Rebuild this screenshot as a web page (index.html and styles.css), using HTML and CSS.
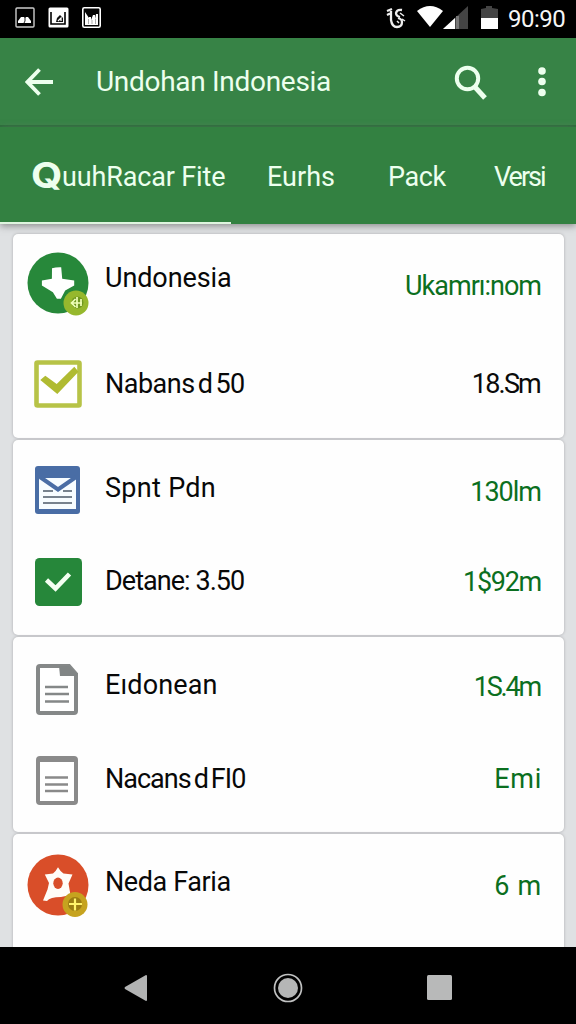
FILE: index.html
```html
<!DOCTYPE html>
<html lang="id">
<head>
<meta charset="utf-8">
<title>Undohan Indonesia</title>
<link rel="stylesheet" href="styles.css">
</head>
<body>
<div class="screen">
  <div class="status">
    <div class="notices">
      <svg width="20" height="21" viewBox="0 0 20 21"><rect x="1" y="1" width="18" height="19" rx="1" fill="none" stroke="#ccc" stroke-width="1.4"/><path d="M3 16v-2l3-4h3l1 1 1-1h2l3 4v2z" fill="#fff"/><path d="M10 10v4l-1 2" stroke="#222" fill="none"/></svg>
      <svg width="21" height="21" viewBox="0 0 21 21"><rect x=".5" y=".5" width="20" height="20" rx="1.5" fill="#fff"/><path d="M3 5v12h14V5" fill="none" stroke="#000" stroke-width="1.6"/><path d="M8 15l1-4 3-3 3 3v4z" fill="#111"/><path d="M10 14l3-3v3" fill="none" stroke="#fff" stroke-width="1.3"/></svg>
      <svg width="19" height="21" viewBox="0 0 19 21"><rect x=".8" y=".8" width="17.400" height="19.400" rx="1.500" fill="#050505" stroke="#fff" stroke-width="1.600"/><path d="M3 18V5l4 6v-1h2v3l2-5h2v4l1-5h2v11z" fill="#fff"/><path d="M6.500 12v5M10 13v4M13.500 12v5" stroke="#888" stroke-width=".7"/></svg>
    </div>
    <div class="signals">
      <svg class="sync" width="22" height="23" viewBox="0 0 22 23"><path d="M2 4l5-2M2 8l4-2M6 4v9q1 7 6 7 5 0 5-5 0-3-4-4M17 3q-5-1-6 3 0 3 4 4" fill="none" stroke="#eee" stroke-width="2.300"/><path d="M15 6l4 3M17 12l3 2M12 14l2 2" stroke="#eee" stroke-width="1.500"/></svg>
      <svg class="wifi" width="26" height="21" viewBox="0 0 26 21"><path d="M0 5Q13-5 26 5L13 21z" fill="#fff"/></svg>
      <svg class="cell" width="25" height="23" viewBox="0 0 25 23"><path d="M25 0v23H0z" fill="#444"/><path d="M12 12v11H0z" fill="#fff"/><path d="M14.500 10v13" stroke="#777" stroke-width="3"/></svg>
      <svg class="battery" width="17" height="23" viewBox="0 0 17 23"><path d="M0 3l5-1V0h6v2l6 1v9H0z" fill="#444"/><path d="M0 12h17v11H0z" fill="#fff"/></svg>
      <span class="clock">90:90</span>
    </div>
  </div>

  <header class="appbar">
    <svg class="back" width="28" height="28" viewBox="0 0 28 28"><path d="M14.500 1.500L2.500 14l12 12.500M2.500 14H28" fill="none" stroke="#edffee" stroke-width="3.800"/></svg>
    <h1 class="title">Undohan Indonesia</h1>
    <svg class="search" width="34" height="36" viewBox="0 0 34 36"><circle cx="13.500" cy="14.500" r="10.700" fill="none" stroke="#edffee" stroke-width="4"/><path d="M20.500 22.500L31 34" stroke="#edffee" stroke-width="5"/></svg>
    <svg class="more" width="8" height="30" viewBox="0 0 8 30"><circle cx="4" cy="4" r="3.800"/><circle cx="4" cy="14.500" r="3.800"/><circle cx="4" cy="25.500" r="3.800"/></svg>
  </header>

  <nav class="tabs">
    <div class="tab tab-active"><span class="big-q">Q</span><span class="tab-name">uuhRacar Fite</span></div>
    <div class="tab tab-second">Eurhs</div>
    <div class="tab tab-third">Pack</div>
    <div class="tab tab-fourth">Versi</div>
  </nav>

  <main class="list">
    <section class="card card-first">
      <div class="row row-a">
        <div class="icon icon-round"><svg width="64" height="66" viewBox="0 0 64 66"><circle cx="31" cy="32" r="30.500" fill="#27883a"/><path d="M25 17.200Q29 16 34.200 16.200L35.200 27.800 47.200 29.500V34.500L38.200 39.500 33.900 47.800H29.900L25.900 41.200 14.900 34.500V29.500L24.900 27.800z" fill="#fff"/><circle cx="49" cy="52" r="12.500" fill="#96b82d"/><circle cx="50.500" cy="51.500" r="6" fill="#6f981f"/><path d="M44 52h11M50 46v11M48.500 48l-4 4 4 4M54 48v7" stroke="#f0ffb8" stroke-width="1.700" fill="none"/></svg></div>
        <div class="label t1">Undonesia</div><div class="value v1">Ukamrı:nom</div>
      </div>
      <div class="row row-b">
        <div class="icon"><svg width="48" height="48" viewBox="0 0 48 48"><rect x="2.500" y="2.500" width="43" height="43" rx="1" fill="#fff" stroke="#b7c347" stroke-width="4.600"/><path d="M6.300 20L11.300 15.700 22.700 24 40.300 6.700 44.500 11.700 23.300 34z" fill="#b0bb32"/></svg></div>
        <div class="label t2">Nabans<span class="thin-gap"></span>d<span class="thin-gap"></span>50</div><div class="value dark v2">18.Sm</div>
      </div>
    </section>

    <section class="card card-second">
      <div class="row row-a">
        <div class="icon icon-left"><svg width="45" height="48" viewBox="0 0 45 48"><rect width="45" height="48" rx="3" fill="#496da5"/><path d="M4 12h37v31H4z" fill="#f6fcff"/><path d="M5 11l18 12.500L41 11" fill="none" stroke="#496da5" stroke-width="4"/><path d="M14 12h18l-9 7.500z" fill="#f6fcff"/><path d="M8 25h10M28 25h9M8 31h29M8 37h29" stroke="#76828e" stroke-width="2.200"/></svg></div>
        <div class="label t3">Spnt Pdn</div><div class="value v3">130lm</div>
      </div>
      <div class="row row-b">
        <div class="icon"><svg width="47" height="48" viewBox="0 0 47 48"><rect width="47" height="48" rx="4.500" fill="#26873a"/><path d="M11.500 22l9 8.500L34.500 16" fill="none" stroke="#f4fff2" stroke-width="4.600"/></svg></div>
        <div class="label t4">Detane: 3.50</div><div class="value v4">1$92m</div>
      </div>
    </section>

    <section class="card card-third">
      <div class="row row-a">
        <div class="icon icon-left"><svg width="42" height="51" viewBox="0 0 42 51"><path d="M4 2h29l7 8v37q0 2-2 2H4q-2 0-2-2V4q0-2 2-2z" fill="#fff" stroke="#858888" stroke-width="4"/><path d="M23 2h10l8 8v2H24z" fill="#818585"/><path d="M9 23h23M9 30h24M9 37.500h24" stroke="#858888" stroke-width="2.600"/></svg></div>
        <div class="label t5">Eıdonean</div><div class="value v5">1S.4m</div>
      </div>
      <div class="row row-b">
        <div class="icon icon-left"><svg width="42" height="49" viewBox="0 0 42 49"><rect x="2" y="2" width="38" height="45" rx="2" fill="#fff" stroke="#8a8a8a" stroke-width="4"/><path d="M3 4h36" stroke="#8a8a8a" stroke-width="4"/><path d="M9 21.500h23M9 28.500h23M9 35h23" stroke="#8a8a8a" stroke-width="2.600"/></svg></div>
        <div class="label t6">Nacans<span class="thin-gap"></span>d<span class="thin-gap"></span>FI0</div><div class="value v6">Emi</div>
      </div>
    </section>

    <section class="card card-fourth">
      <div class="row row-a">
        <div class="icon icon-round"><svg width="64" height="66" viewBox="0 0 64 66"><circle cx="31" cy="32" r="30.500" fill="#d94e29"/><path d="M31 14.200Q33 18 36.500 20.500L45.500 21.500 41.500 30.500 43.500 42 34 44Q23 44 20 48L16 47.500 20.500 36.500 22 30 17.800 21.500 26 20.500Q29 18 31 14.200z" fill="#fffdf8"/><ellipse cx="31" cy="30.300" rx="4.700" ry="5.700" fill="#d94e29"/><circle cx="48" cy="51.500" r="12.500" fill="#c6a31f"/><circle cx="48" cy="51" r="7" fill="#9b7d13"/><path d="M42 51h13M48 45.500v12" stroke="#fff36a" stroke-width="2.200"/></svg></div>
        <div class="label t7">Neda Faria</div><div class="value v7">6 m</div>
      </div>
    </section>
  </main>

  <footer class="navbar">
    <svg width="24" height="28" viewBox="0 0 24 28"><path d="M1 13L22 1q1 0 1 1v24q0 1-1 1L1 15q-1-1 0-2z" fill="#b2b3b3"/></svg>
    <svg class="home" width="30" height="30" viewBox="0 0 30 30"><circle cx="15" cy="15" r="13.500" fill="none" stroke="#c0c1c1" stroke-width="1.700"/><circle cx="15" cy="15" r="10" fill="#b5b6b6"/></svg>
    <svg class="recent" width="25" height="25" viewBox="0 0 25 25"><rect width="25" height="25" rx="1.500" fill="#b8b9b9"/></svg>
  </footer>
</div>
</body>
</html>
```
FILE: styles.css
```css
* { box-sizing: border-box; }
body { margin: 0; font-family: Roboto, "Liberation Sans", sans-serif; }
svg { display: block; flex: none; }
.screen { width: 576px; height: 1024px; display: flex; flex-direction: column; overflow: hidden; background: #dfe1e3; }

.status { height: 38px; flex: none; background: #000; display: flex; justify-content: space-between; padding: 0 10px 0 15px; }
.notices { display: flex; gap: 13px; padding-top: 7px; }
.signals { display: flex; padding-top: 6px; }
.sync { margin-top: 1px; }
.wifi { margin-left: 10px; }
.battery { margin-left: 13px; }
.clock { width: 58px; margin-left: 10px; color: #f6f6f6; font-size: 24px; line-height: 27px; letter-spacing: -0.500px; white-space: nowrap; }

.appbar { height: 89px; flex: none; background: #378346; display: flex; align-items: center; padding: 0 30px 0 25px; border-bottom: 2px solid #286d38; }
.title { margin: 0 0 0 43px; font-size: 28px; font-weight: 400; line-height: 36px; letter-spacing: -0.300px; color: #edffee; white-space: nowrap; flex: 1; padding-top: 1px; }
.search { margin-right: 50px; }
.more { fill: #edffee; }

.tabs { height: 97px; flex: none; background: #338141; display: flex; color: #edffee; font-size: 27px; line-height: 100px; white-space: nowrap; box-shadow: 0 2px 7px #777c; position: relative; }
.tab-active { width: 231px; padding-left: 31px; display: flex; border-bottom: 2px solid #dff5df; }
.big-q { width: 31px; font: 700 36px/97px Inter, sans-serif; transform: scaleX(1.120); transform-origin: left; }
.tab-name { letter-spacing: -0.150px; }
.tab-second { width: 157px; padding-left: 36px; }
.tab-third { width: 106px; letter-spacing: -0.400px; }
.tab-fourth { width: 82px; letter-spacing: -2px; }

.list { height: 723px; flex: none; padding: 10px 12px 0 13px; overflow: hidden; }
.card { background: #fefefe; border-radius: 5px; box-shadow: 0 0 3px #a9aaad; margin-bottom: 2px; }
.card-first { height: 204px; }
.card-second { height: 195px; }
.card-third { height: 195px; }
.card-fourth { height: 130px; }
.row { display: grid; grid-template-columns: 92px 1fr auto; align-items: center; padding-right: 22px; height: 100px; }
.icon { width: 90px; display: flex; justify-content: center; }
.icon-round { padding-left: 2px; }
.icon-left { padding-right: 2px; }
.label { font-size: 27px; line-height: 36px; color: #080808; white-space: nowrap; }
.value { font-size: 27px; line-height: 36px; color: #0b6f20; white-space: nowrap; }
.value.dark { color: #0a0a0a; }
.row-a .label { padding-bottom: 8px; }
.row-a .value { padding-top: 4px; }
.card-first .row-a .label { padding-bottom: 12px; }
.card-second .row-a .label { padding-bottom: 4px; }
.card-second .row-b { height: 84px; }
.card-third .row-a { height: 104px; }
.card-third .row-b { height: 78px; }
.card-fourth .row-a { height: 104px; }
.thin-gap { display: inline-block; width: 3px; }

.t1 { letter-spacing: -0.100px; }
.t2 { letter-spacing: -0.500px; }
.t3 { letter-spacing: 0.300px; }
.t4 { letter-spacing: -0.950px; padding-bottom: 2px; }
.t5 { letter-spacing: 0.150px; }
.t6 { letter-spacing: -1px; padding-bottom: 3px; }
.t7 { letter-spacing: -0.400px; }
.v1 { letter-spacing: -1px; padding-right: 1px; }
.v2 { letter-spacing: -1.800px; padding-right: 2px; }
.v3 { letter-spacing: -1px; padding-right: 1px; }
.v4 { letter-spacing: -1.300px; padding-right: 1px; }
.card-third .v5 { letter-spacing: -2.200px; padding: 0 2px 4px 0; }
.v6 { letter-spacing: 0.700px; padding-bottom: 2px; }
.card-fourth .v7 { letter-spacing: 0.700px; padding-top: 0; }

.navbar { flex: 1; background: #000; display: flex; align-items: center; padding: 4px 0 0 124px; }
.home { margin-left: 125px; }
.recent { margin-left: 124px; }
```
